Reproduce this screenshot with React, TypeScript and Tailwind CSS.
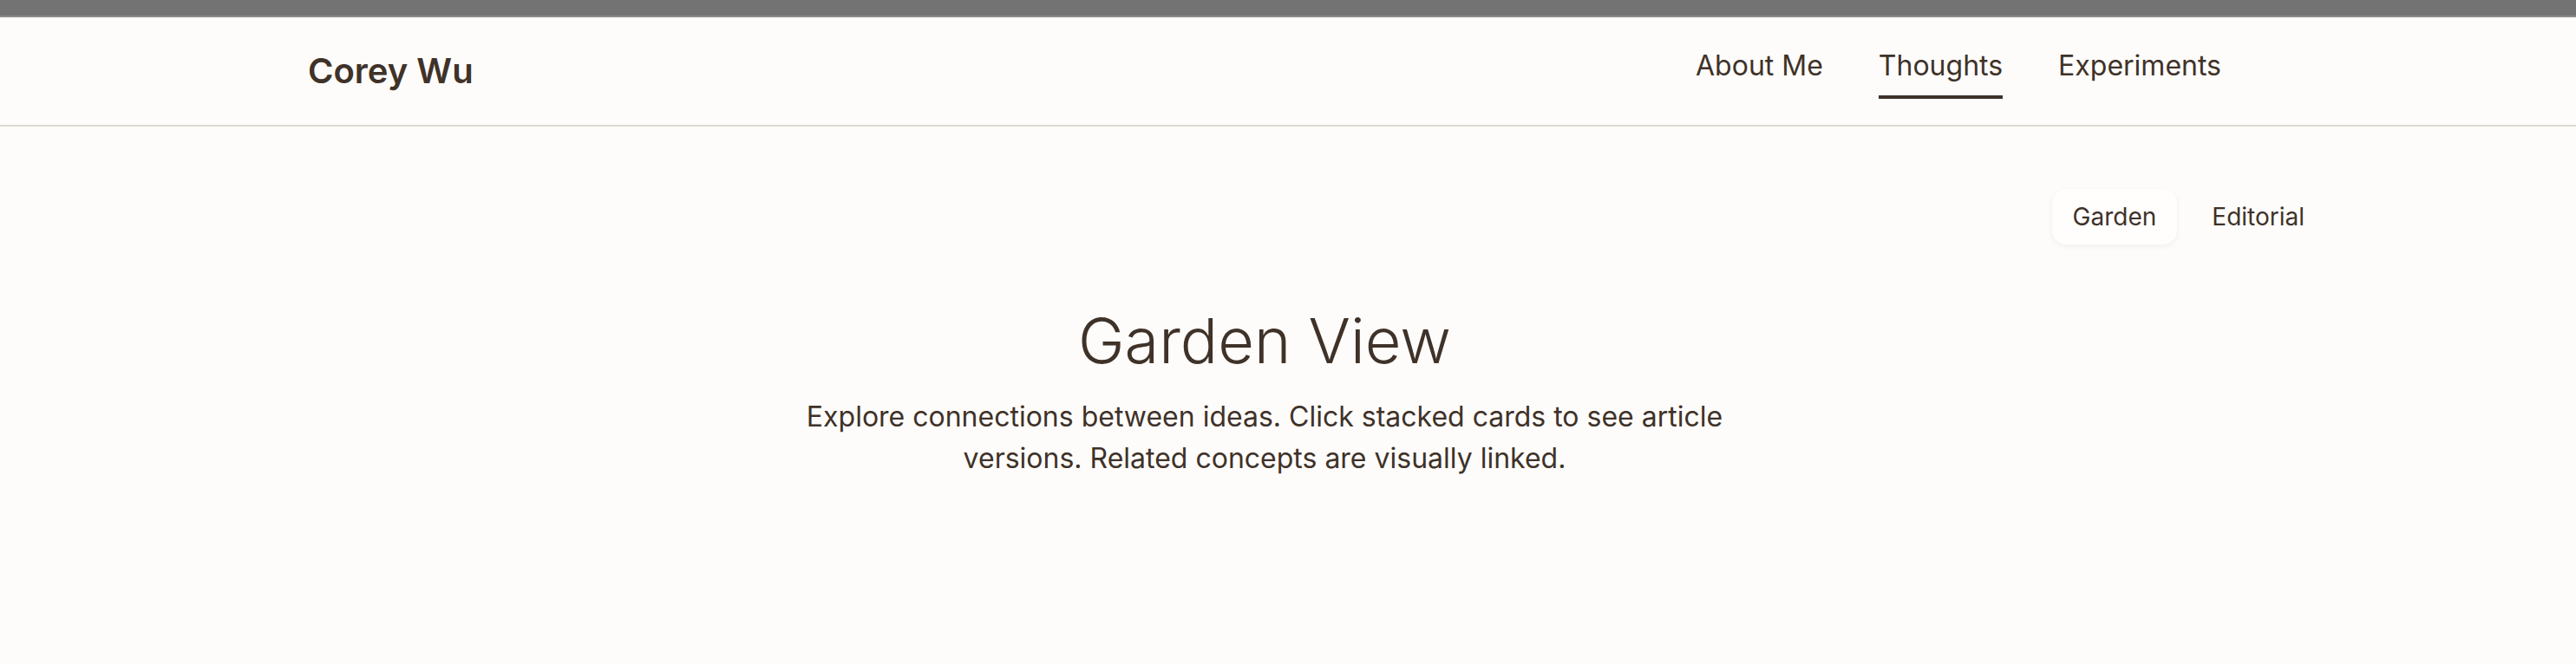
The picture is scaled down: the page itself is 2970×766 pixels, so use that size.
import React from "react";

const navLinks = [
  { label: "About Me", active: false },
  { label: "Thoughts", active: true },
  { label: "Experiments", active: false },
];

const App: React.FC = () => {
  return (
    <div
      className="min-h-[766px] bg-[#fdfcfa] text-[#3f3229]"
      style={{ fontFamily: "Inter, 'Noto Sans', sans-serif" }}
    >
      {/* browser strip */}
      <div className="h-[18px] bg-[#737373]" />
      <div className="h-[2px] bg-[#8c8c8c]" />

      {/* Header */}
      <header className="h-[126px] border-b-2 border-[#dcd9d2] flex items-center justify-between pl-[355px] pr-[409px]">
        <a className="text-[40px] leading-[56px] font-semibold">Corey Wu</a>
        <nav className="flex items-center gap-[64px] pt-[2px]">
          {navLinks.map((link) => (
            <a
              key={link.label}
              className={`text-[32px] leading-[48px] pb-[10px] border-b-4 ${
                link.active ? "border-[#3f3229]" : "border-transparent"
              }`}
            >
              {link.label}
            </a>
          ))}
        </nav>
      </header>

      {/* Main */}
      <main className="pt-[72px] pr-[54px]">
        <div className="flex justify-end gap-[16px] pr-[235px]">
          <button className="px-[24px] py-[12px] text-[28px] leading-[40px] rounded-[16px] bg-[#fffefd] shadow-[0_2px_6px_rgba(60,40,20,0.06)]">
            Garden
          </button>
          <button className="px-[24px] py-[12px] text-[28px] leading-[40px] rounded-[16px]">
            Editorial
          </button>
        </div>

        <section className="mt-[71px] flex flex-col items-center text-center">
          <h1 className="text-[72px] leading-[80px] font-light">Garden View</h1>
          <p className="mt-[24px] max-w-[1150px] text-[32px] leading-[48px]">
            Explore connections between ideas. Click stacked cards to see article
            versions. Related concepts are visually linked.
          </p>
        </section>
      </main>
    </div>
  );
};

export default App;
